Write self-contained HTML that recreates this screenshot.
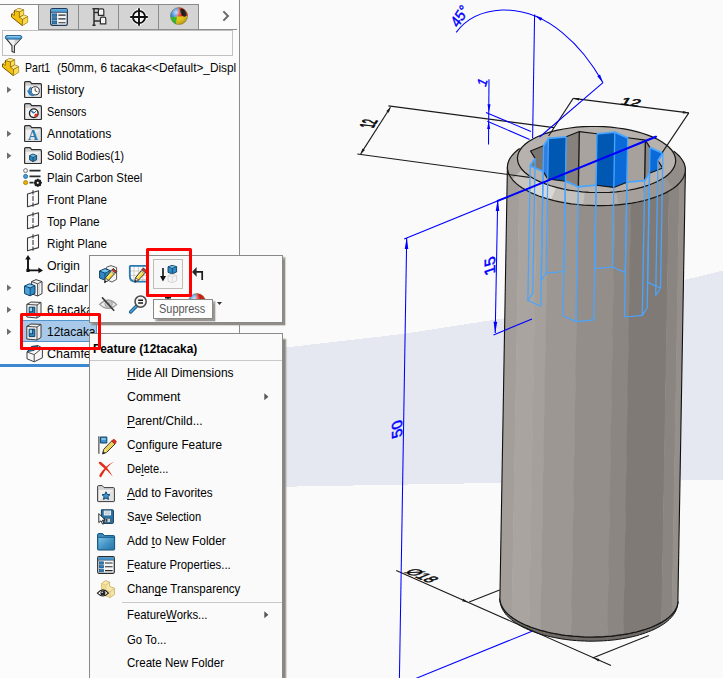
<!DOCTYPE html>
<html lang="en"><head><meta charset="utf-8"><title>SolidWorks - Suppress feature</title>
<style>
html,body{margin:0;padding:0}
body{width:723px;height:678px;position:relative;overflow:hidden;background:#fafafa;font-family:"Liberation Sans",sans-serif;font-size:12.5px;color:#0c0c0c}
.t{position:absolute;white-space:nowrap;transform-origin:0 50%;color:#050505}
.t u{text-decoration:underline;text-underline-offset:1.5px;text-decoration-thickness:1px}
.ic{position:absolute;overflow:visible}
.pbg{position:absolute;left:0;top:0;width:239px;height:678px;background:#fcfcfc}
.pline{position:absolute;left:239px;top:0;width:1px;height:678px;background:#8c8c8c}
.tabtop{position:absolute;left:0;top:4px;width:199px;height:1px;background:#8a8a8a}
.tab{position:absolute;top:4px;width:40px;height:26px;background:#d4d4d4;border:1px solid #8a8a8a;border-right:none;box-sizing:border-box}
.tab.act{background:#fcfcfc;border:none;border-top:1px solid #8a8a8a;height:26px}
.tabline{position:absolute;left:38px;top:29px;width:199px;height:1px;background:#8e8e8e}
.filter{position:absolute;left:2px;top:30px;width:231px;height:26px;border:1px solid #c0c0c0;box-sizing:border-box;background:#fbfbfb}
.sel{position:absolute;left:23px;top:320px;width:74px;height:22px;background:#a8c9e9;border:1px solid #4f95cc;border-left:none;box-sizing:border-box}
.rollbar{position:absolute;left:0;top:364px;width:90px;height:3px;background:#3c88d0}
.red{position:absolute;border:3px solid #fe0000;border-radius:1.5px;box-sizing:content-box}
.tb{position:absolute;left:89px;top:255px;width:194px;height:68px;background:#fafafa;border:1px solid #8b8985;box-sizing:border-box;box-shadow:2px 2px 1.5px 0.5px #8f8c88}
.tbbtn{position:absolute;left:153px;top:259px;width:30px;height:30px;background:#f7f7f7;border:1px solid #bfbcb8;box-sizing:border-box}
.tip{position:absolute;left:153px;top:299px;width:60px;height:20px;background:#fdfdfd;border:1px solid #8b8985;box-sizing:border-box;box-shadow:2px 2px 1.5px 0.5px #9a9793}
.menu{position:absolute;left:89px;top:333px;width:194px;height:360px;background:#fafafa;border:1px solid #8b8985;box-sizing:border-box;box-shadow:3px 6px 1.5px -0.2px #8a8783}
.msep{position:absolute;right:0;height:1px;background:#c9c9c9}
.tabend{position:absolute;left:198px;top:4px;width:1px;height:26px;background:#8a8a8a}

</style></head>
<body>
<svg id="scene" width="723" height="678" viewBox="0 0 723 678" style="position:absolute;left:0;top:0">
<rect x="0" y="0" width="723" height="678" fill="#fafafa"/>
<polygon points="240.0,353.0 287.0,347.3 404.0,333.8 440.0,328.2 503.0,318.5 600.0,299.6 684.0,280.1 723.0,270.5 723.0,480.0 684.0,480.0 503.0,482.8 287.0,486.7 240.0,487.5" fill="#e6e8f1" shape-rendering="crispEdges"/>
<rect x="240" y="486" width="483" height="192" fill="#f9f9f9" opacity="0"/>
<polygon points="499.9,598.3 500.0,599.9 500.2,601.5 500.6,603.1 501.2,604.7 501.9,606.3 502.8,607.9 503.8,609.5 505.1,611.1 506.4,612.6 508.0,614.1 509.7,615.6 511.5,617.0 513.5,618.5 515.6,619.8 517.9,621.2 520.3,622.5 522.9,623.8 525.5,625.0 528.3,626.1 531.2,627.3 534.2,628.3 537.3,629.3 540.5,630.3 543.9,631.2 547.2,632.0 550.7,632.8 554.3,633.5 557.9,634.2 561.5,634.8 565.3,635.3 569.0,635.7 572.8,636.1 576.7,636.4 580.5,636.7 584.4,636.9 588.3,637.0 592.1,637.0 596.0,636.9 599.9,636.8 603.7,636.7 607.5,636.4 611.3,636.1 615.1,635.7 618.7,635.2 622.4,634.7 625.9,634.1 629.4,633.5 632.9,632.7 636.2,632.0 639.4,631.1 642.6,630.2 645.6,629.3 648.6,628.2 651.4,627.2 654.1,626.0 656.7,624.9 659.1,623.6 661.4,622.4 663.6,621.1 665.7,619.7 667.6,618.3 669.3,616.9 670.9,615.4 672.3,614.0 673.6,612.4 674.7,610.9 675.7,609.3 676.4,607.8 677.1,606.2 677.5,604.6 677.8,603.0 677.9,601.3 677.9,601.3 677.8,603.6 677.5,605.5 677.1,607.4 676.4,609.2 675.7,611.0 674.7,612.8 673.6,614.5 672.3,616.2 670.9,617.8 669.3,619.4 667.6,621.0 665.7,622.5 663.6,624.0 661.4,625.4 659.1,626.8 656.7,628.1 654.1,629.4 651.4,630.6 648.6,631.7 645.6,632.8 642.6,633.9 639.4,634.8 636.2,635.8 632.9,636.6 629.4,637.4 625.9,638.1 622.4,638.7 618.7,639.3 615.1,639.8 611.3,640.2 607.5,640.5 603.7,640.8 599.9,641.0 596.0,641.1 592.1,641.2 588.3,641.2 584.4,641.0 580.5,640.9 576.7,640.6 572.8,640.3 569.0,639.9 565.3,639.4 561.5,638.9 557.9,638.2 554.3,637.5 550.7,636.8 547.2,636.0 543.9,635.1 540.5,634.1 537.3,633.1 534.2,632.0 531.2,630.8 528.3,629.6 525.5,628.4 522.9,627.1 520.3,625.7 517.9,624.3 515.6,622.9 513.5,621.4 511.5,619.8 509.7,618.2 508.0,616.6 506.4,615.0 505.1,613.3 503.8,611.5 502.8,609.8 501.9,608.0 501.2,606.2 500.6,604.4 500.2,602.5 500.0,600.5 499.9,598.3" fill="#6f6a66" stroke="#111" stroke-width="1" stroke-linejoin="round"/>
<clipPath id="bodyclip"><polygon points="507.4,166.9 499.9,598.3 500.0,599.9 500.2,601.5 500.6,603.1 501.2,604.7 501.9,606.3 502.8,607.9 503.8,609.5 505.1,611.1 506.4,612.6 508.0,614.1 509.7,615.6 511.5,617.0 513.5,618.5 515.6,619.8 517.9,621.2 520.3,622.5 522.9,623.8 525.5,625.0 528.3,626.1 531.2,627.3 534.2,628.3 537.3,629.3 540.5,630.3 543.9,631.2 547.2,632.0 550.7,632.8 554.3,633.5 557.9,634.2 561.5,634.8 565.3,635.3 569.0,635.7 572.8,636.1 576.7,636.4 580.5,636.7 584.4,636.9 588.3,637.0 592.1,637.0 596.0,636.9 599.9,636.8 603.7,636.7 607.5,636.4 611.3,636.1 615.1,635.7 618.7,635.2 622.4,634.7 625.9,634.1 629.4,633.5 632.9,632.7 636.2,632.0 639.4,631.1 642.6,630.2 645.6,629.3 648.6,628.2 651.4,627.2 654.1,626.0 656.7,624.9 659.1,623.6 661.4,622.4 663.6,621.1 665.7,619.7 667.6,618.3 669.3,616.9 670.9,615.4 672.3,614.0 673.6,612.4 674.7,610.9 675.7,609.3 676.4,607.8 677.1,606.2 677.5,604.6 677.8,603.0 677.9,601.3 685.4,170.0 685.4,170.0 685.3,168.4 685.1,166.8 684.7,165.2 684.2,163.6 683.4,162.0 682.5,160.4 681.5,158.8 680.2,157.2 678.9,155.7 677.3,154.2 675.6,152.7 673.8,151.2 671.8,149.8 669.7,148.4 667.4,147.1 665.0,145.8 662.4,144.5 659.8,143.3 657.0,142.1 654.1,141.0 651.1,139.9 648.0,138.9 644.8,138.0 641.5,137.1 638.1,136.2 634.6,135.5 631.0,134.7 627.4,134.1 623.8,133.5 620.1,133.0 616.3,132.5 612.5,132.2 608.6,131.8 604.8,131.6 600.9,131.4 597.0,131.3 593.2,131.3 589.3,131.3 585.4,131.4 581.6,131.6 577.8,131.9 574.0,132.2 570.2,132.6 566.6,133.0 562.9,133.6 559.4,134.2 555.9,134.8 552.5,135.5 549.1,136.3 545.9,137.2 542.7,138.1 539.7,139.0 536.7,140.0 533.9,141.1 531.2,142.2 528.6,143.4 526.2,144.6 523.9,145.9 521.7,147.2 519.6,148.6 517.8,150.0 516.0,151.4 514.4,152.8 513.0,154.3 511.7,155.8 510.6,157.4 509.6,158.9 508.9,160.5 508.2,162.1 507.8,163.7 507.5,165.3 507.4,166.9" /></clipPath>
<g clip-path="url(#bodyclip)"><polygon points="504.5,104.0 521.0,104.3 511.3,661.4 494.9,661.1" fill="#a39e99"/><polygon points="520.5,104.2 538.6,104.6 528.9,661.7 510.8,661.4" fill="#a9a49f"/><polygon points="538.1,104.6 550.0,104.8 540.3,661.9 528.4,661.7" fill="#a5a09b"/><polygon points="549.5,104.8 580.7,105.3 571.0,662.4 539.8,661.9" fill="#9c9792"/><polygon points="580.2,105.3 617.0,105.9 607.3,663.0 570.5,662.4" fill="#938e89"/><polygon points="616.5,105.9 633.0,106.2 623.3,663.3 606.8,663.0" fill="#8b8681"/><polygon points="632.5,106.2 670.7,106.9 661.0,664.0 622.8,663.3" fill="#7f7a75"/><polygon points="670.2,106.8 681.0,107.0 671.3,664.1 660.5,664.0" fill="#8a8580"/><polygon points="680.5,107.0 690.0,107.2 680.3,664.3 670.8,664.1" fill="#948f8a"/></g>
<line x1="507.4" y1="166.9" x2="499.9" y2="598.3" stroke="#101010" stroke-width="1.1"/>
<line x1="685.4" y1="170.0" x2="677.9" y2="601.3" stroke="#101010" stroke-width="1.1"/>
<polyline points="499.9,598.3 500.0,599.9 500.2,601.5 500.6,603.1 501.2,604.7 501.9,606.3 502.8,607.9 503.8,609.5 505.1,611.1 506.4,612.6 508.0,614.1 509.7,615.6 511.5,617.0 513.5,618.5 515.6,619.8 517.9,621.2 520.3,622.5 522.9,623.8 525.5,625.0 528.3,626.1 531.2,627.3 534.2,628.3 537.3,629.3 540.5,630.3 543.9,631.2 547.2,632.0 550.7,632.8 554.3,633.5 557.9,634.2 561.5,634.8 565.3,635.3 569.0,635.7 572.8,636.1 576.7,636.4 580.5,636.7 584.4,636.9 588.3,637.0 592.1,637.0 596.0,636.9 599.9,636.8 603.7,636.7 607.5,636.4 611.3,636.1 615.1,635.7 618.7,635.2 622.4,634.7 625.9,634.1 629.4,633.5 632.9,632.7 636.2,632.0 639.4,631.1 642.6,630.2 645.6,629.3 648.6,628.2 651.4,627.2 654.1,626.0 656.7,624.9 659.1,623.6 661.4,622.4 663.6,621.1 665.7,619.7 667.6,618.3 669.3,616.9 670.9,615.4 672.3,614.0 673.6,612.4 674.7,610.9 675.7,609.3 676.4,607.8 677.1,606.2 677.5,604.6 677.8,603.0 677.9,601.3" fill="none" stroke="#151515" stroke-width="1.2"/>
<polygon points="685.4,170.0 685.1,166.8 684.2,163.6 682.5,160.4 680.2,157.2 677.3,154.2 673.8,151.2 669.7,148.4 665.0,145.8 659.8,143.3 654.1,141.0 648.0,138.9 641.5,137.1 634.6,135.5 627.4,134.1 620.1,133.0 612.5,132.2 604.8,131.6 597.0,131.3 589.3,131.3 581.6,131.6 574.0,132.2 566.6,133.0 559.4,134.2 552.5,135.5 545.9,137.2 539.7,139.0 533.9,141.1 528.6,143.4 523.9,145.9 519.6,148.6 516.0,151.4 513.0,154.3 510.6,157.4 508.9,160.5 507.8,163.7 507.4,166.9 507.7,170.2 508.6,173.4 510.3,176.6 512.5,179.7 515.5,182.8 519.0,185.7 523.1,188.5 527.8,191.2 533.0,193.7 538.7,196.0 544.8,198.0 551.3,199.9 558.2,201.5 565.3,202.9 572.7,204.0 580.3,204.8 588.0,205.4 595.7,205.6 603.5,205.6 611.2,205.3 618.8,204.8 626.2,203.9 633.4,202.8 640.3,201.4 646.9,199.8 653.1,197.9 658.9,195.9 664.2,193.6 668.9,191.1 673.1,188.4 676.8,185.6 679.8,182.6 682.2,179.6 683.9,176.5 685.0,173.3 685.4,170.0" fill="#b5b0ab"/>
<polygon points="519.6,148.6 516.9,150.7 514.4,152.8 512.3,155.1 510.6,157.4 509.2,159.7 508.2,162.1 507.6,164.5 507.4,166.9 517.4,158.1 517.6,156.0 518.2,153.8 519.1,151.7 520.3,149.6 521.8,147.6 523.7,145.6 525.9,143.7 528.3,141.8" fill="#a9a49f" stroke="#a9a49f" stroke-width="0.4"/>
<polygon points="507.4,166.9 507.5,168.6 507.7,170.2 508.1,171.8 508.6,173.4 509.4,175.0 510.3,176.6 511.3,178.2 512.5,179.7 522.0,169.5 520.9,168.1 520.0,166.7 519.2,165.3 518.5,163.9 518.0,162.5 517.7,161.0 517.5,159.6 517.4,158.1" fill="#aaa5a0" stroke="#aaa5a0" stroke-width="0.4"/>
<polygon points="512.5,179.7 514.1,181.4 515.8,183.1 517.7,184.7 519.8,186.3 522.0,187.8 524.5,189.3 527.1,190.8 529.8,192.2 537.4,180.6 534.9,179.3 532.6,178.0 530.5,176.7 528.4,175.3 526.6,173.9 524.9,172.5 523.4,171.0 522.0,169.5" fill="#c9c6c2" stroke="#c9c6c2" stroke-width="0.4"/>
<polygon points="529.8,192.2 532.2,193.3 534.7,194.4 537.2,195.4 539.9,196.4 542.6,197.3 545.5,198.2 548.4,199.1 551.3,199.9 556.5,187.4 553.9,186.7 551.3,185.9 548.8,185.1 546.3,184.3 544.0,183.4 541.7,182.5 539.5,181.6 537.4,180.6" fill="#dad8d5" stroke="#dad8d5" stroke-width="0.4"/>
<polygon points="551.3,199.9 555.1,200.8 558.9,201.7 562.8,202.4 566.8,203.1 570.9,203.7 575.0,204.3 579.2,204.7 583.4,205.1 585.0,192.0 581.2,191.7 577.5,191.3 573.9,190.8 570.3,190.3 566.7,189.7 563.2,189.0 559.8,188.2 556.5,187.4" fill="#c4c0bb" stroke="#c4c0bb" stroke-width="0.4"/>
<polygon points="583.4,205.1 587.8,205.4 592.3,205.6 596.7,205.7 601.2,205.7 605.6,205.6 610.1,205.4 614.5,205.1 618.8,204.8 616.5,191.8 612.6,192.1 608.7,192.3 604.8,192.5 600.8,192.5 596.8,192.5 592.9,192.4 588.9,192.3 585.0,192.0" fill="#b3aea9" stroke="#b3aea9" stroke-width="0.4"/>
<polygon points="618.8,204.8 622.5,204.4 626.2,203.9 629.9,203.4 633.4,202.8 636.9,202.2 640.3,201.4 643.7,200.7 646.9,199.8 641.5,187.3 638.6,188.1 635.6,188.8 632.6,189.4 629.5,190.0 626.3,190.5 623.1,191.0 619.8,191.4 616.5,191.8" fill="#a5a09b" stroke="#a5a09b" stroke-width="0.4"/>
<polygon points="646.9,199.8 650.8,198.7 654.6,197.4 658.2,196.1 661.6,194.7 664.8,193.3 667.8,191.7 670.6,190.1 673.1,188.4 664.8,177.2 662.5,178.7 660.0,180.1 657.3,181.5 654.5,182.8 651.5,184.1 648.3,185.2 644.9,186.3 641.5,187.3" fill="#9b9691" stroke="#9b9691" stroke-width="0.4"/>
<polygon points="673.1,188.4 675.9,186.3 678.4,184.1 680.5,181.9 682.2,179.6 683.6,177.2 684.5,174.9 685.2,172.5 685.4,170.0 675.7,160.9 675.5,163.0 674.9,165.2 674.0,167.3 672.8,169.4 671.3,171.4 669.4,173.4 667.2,175.3 664.8,177.2" fill="#928d88" stroke="#928d88" stroke-width="0.4"/>
<polygon points="685.4,170.0 685.2,167.6 684.7,165.2 683.8,162.8 682.5,160.4 680.9,158.0 678.9,155.7 676.5,153.4 673.8,151.2 665.3,144.2 667.8,146.1 669.9,148.1 671.6,150.2 673.1,152.3 674.2,154.4 675.1,156.5 675.5,158.7 675.7,160.9" fill="#948f8a" stroke="#948f8a" stroke-width="0.4"/>
<polyline points="519.6,148.6 516.7,150.8 514.1,153.1 512.0,155.5 510.2,158.0 508.9,160.5 508.0,163.1 507.5,165.6 507.4,168.2 507.8,170.8 508.6,173.4 509.9,176.0 511.6,178.5 513.6,181.0 516.1,183.4 519.0,185.7 522.3,188.0 525.9,190.1 529.8,192.2 534.1,194.1 538.7,196.0 543.6,197.6 548.7,199.2 554.0,200.6 559.6,201.8 565.3,202.9 571.2,203.8 577.3,204.5 583.4,205.1 589.5,205.4 595.7,205.6 602.0,205.7 608.1,205.5 614.3,205.2 620.3,204.6 626.2,203.9 632.0,203.1 637.6,202.0 643.0,200.8 648.2,199.5 653.1,197.9 657.8,196.3 662.1,194.5 666.1,192.6 669.8,190.5 673.1,188.4 676.1,186.2 678.7,183.8 680.8,181.4 682.6,179.0 683.9,176.5 684.8,173.9 685.3,171.3 685.4,168.7 685.0,166.1 684.2,163.6 682.9,161.0 681.2,158.5 679.2,156.0 676.7,153.6 673.8,151.2" fill="none" stroke="#151515" stroke-width="1.2"/>
<polygon points="675.7,160.9 675.4,158.0 674.6,155.1 673.1,152.3 671.1,149.5 668.5,146.8 665.3,144.2 661.7,141.7 657.5,139.3 652.9,137.1 647.8,135.1 642.4,133.2 636.6,131.6 630.5,130.1 624.1,128.9 617.6,128.0 610.9,127.2 604.0,126.7 597.1,126.5 590.2,126.5 583.4,126.7 576.6,127.2 570.0,128.0 563.6,129.0 557.5,130.2 551.6,131.7 546.1,133.3 541.0,135.2 536.3,137.2 532.1,139.4 528.3,141.8 525.1,144.3 522.4,146.9 520.3,149.6 518.7,152.4 517.8,155.3 517.4,158.1 517.7,161.0 518.5,163.9 520.0,166.7 522.0,169.5 524.6,172.2 527.8,174.8 531.4,177.3 535.6,179.7 540.2,181.9 545.3,183.9 550.7,185.8 556.5,187.4 562.6,188.9 569.0,190.1 575.5,191.0 582.2,191.8 589.1,192.3 596.0,192.5 602.9,192.5 609.7,192.3 616.5,191.8 623.1,191.0 629.5,190.0 635.6,188.8 641.5,187.3 647.0,185.7 652.1,183.8 656.8,181.8 661.0,179.6 664.8,177.2 668.0,174.7 670.7,172.1 672.8,169.4 674.4,166.6 675.3,163.7 675.7,160.9" fill="#b7b2ad"/>
<clipPath id="holeclip"><polygon points="662.9,153.2 650.0,147.6 645.4,140.1 627.7,137.8 614.8,132.2 597.0,133.8 579.3,131.6 566.2,136.8 548.4,138.4 543.6,145.8 530.5,150.9 535.1,158.4 530.2,165.8 543.1,171.4 547.7,178.9 565.4,181.2 578.3,186.8 596.1,185.2 613.8,187.4 626.9,182.2 644.7,180.6 649.5,173.2 662.6,168.1 658.0,160.6" /></clipPath>
<g clip-path="url(#holeclip)"><polygon points="662.9,153.2 650.0,147.6 645.4,140.1 627.7,137.8 614.8,132.2 597.0,133.8 579.3,131.6 566.2,136.8 548.4,138.4 543.6,145.8 530.5,150.9 535.1,158.4 530.2,165.8 543.1,171.4 547.7,178.9 565.4,181.2 578.3,186.8 596.1,185.2 613.8,187.4 626.9,182.2 644.7,180.6 649.5,173.2 662.6,168.1 658.0,160.6" fill="#8a8580"/><polygon points="535.1,158.4 530.5,150.9 528.1,285.7 532.8,293.2" fill="#8f8a85" stroke="#8f8a85" stroke-width="0.5"/><polygon points="530.5,150.9 543.6,145.8 541.2,280.5 528.1,285.7" fill="#7b7671" stroke="#7b7671" stroke-width="0.5"/><polygon points="543.6,145.8 548.4,138.4 546.1,273.2 541.2,280.5" fill="#2f7fe0" stroke="#2f7fe0" stroke-width="0.5"/><polygon points="548.4,138.4 566.2,136.8 563.9,271.5 546.1,273.2" fill="#0058b3" stroke="#0058b3" stroke-width="0.5"/><polygon points="566.2,136.8 579.3,131.6 577.0,266.3 563.9,271.5" fill="#86817c" stroke="#86817c" stroke-width="0.5"/><polygon points="579.3,131.6 597.0,133.8 594.7,268.6 577.0,266.3" fill="#a8a39e" stroke="#a8a39e" stroke-width="0.5"/><polygon points="597.0,133.8 614.8,132.2 612.4,267.0 594.7,268.6" fill="#0058b3" stroke="#0058b3" stroke-width="0.5"/><polygon points="614.8,132.2 627.7,137.8 625.3,272.6 612.4,267.0" fill="#0a6bd8" stroke="#0a6bd8" stroke-width="0.5"/><polygon points="627.7,137.8 645.4,140.1 643.0,274.9 625.3,272.6" fill="#a6a19c" stroke="#a6a19c" stroke-width="0.5"/><polygon points="645.4,140.1 650.0,147.6 647.6,282.4 643.0,274.9" fill="#8c8782" stroke="#8c8782" stroke-width="0.5"/><polygon points="650.0,147.6 662.9,153.2 660.5,288.0 647.6,282.4" fill="#0a6bd8" stroke="#0a6bd8" stroke-width="0.5"/><polygon points="662.9,153.2 658.0,160.6 655.7,295.4 660.5,288.0" fill="#2f7fe0" stroke="#2f7fe0" stroke-width="0.5"/><polygon points="658.0,160.6 662.6,168.1 660.3,302.8 655.7,295.4" fill="#9a9590" stroke="#9a9590" stroke-width="0.5"/><line x1="579.3" y1="131.6" x2="577.0" y2="266.3" stroke="#1a1a1a" stroke-width="1.4"/><line x1="645.4" y1="140.1" x2="643.0" y2="274.9" stroke="#1a1a1a" stroke-width="1.4"/></g>
<polygon points="675.7,160.9 675.4,158.0 674.6,155.1 673.1,152.3 671.1,149.5 668.5,146.8 665.3,144.2 661.7,141.7 657.5,139.3 652.9,137.1 647.8,135.1 642.4,133.2 636.6,131.6 630.5,130.1 624.1,128.9 617.6,128.0 610.9,127.2 604.0,126.7 597.1,126.5 590.2,126.5 583.4,126.7 576.6,127.2 570.0,128.0 563.6,129.0 557.5,130.2 551.6,131.7 546.1,133.3 541.0,135.2 536.3,137.2 532.1,139.4 528.3,141.8 525.1,144.3 522.4,146.9 520.3,149.6 518.7,152.4 517.8,155.3 517.4,158.1 517.7,161.0 518.5,163.9 520.0,166.7 522.0,169.5 524.6,172.2 527.8,174.8 531.4,177.3 535.6,179.7 540.2,181.9 545.3,183.9 550.7,185.8 556.5,187.4 562.6,188.9 569.0,190.1 575.5,191.0 582.2,191.8 589.1,192.3 596.0,192.5 602.9,192.5 609.7,192.3 616.5,191.8 623.1,191.0 629.5,190.0 635.6,188.8 641.5,187.3 647.0,185.7 652.1,183.8 656.8,181.8 661.0,179.6 664.8,177.2 668.0,174.7 670.7,172.1 672.8,169.4 674.4,166.6 675.3,163.7 675.7,160.9" fill="none" stroke="#151515" stroke-width="1.2"/>
<polyline points="649.5,173.2 662.6,168.1 658.0,160.6" fill="none" stroke="#151515" stroke-width="1.1" stroke-linejoin="round"/>
<polyline points="650.0,147.6 645.4,140.1 627.7,137.8" fill="none" stroke="#151515" stroke-width="1.1" stroke-linejoin="round"/>
<polyline points="597.0,133.8 579.3,131.6 566.2,136.8" fill="none" stroke="#151515" stroke-width="1.1" stroke-linejoin="round"/>
<polyline points="543.6,145.8 530.5,150.9 535.1,158.4" fill="none" stroke="#151515" stroke-width="1.1" stroke-linejoin="round"/>
<polyline points="543.1,171.4 547.7,178.9 565.4,181.2" fill="none" stroke="#151515" stroke-width="1.1" stroke-linejoin="round"/>
<polyline points="596.1,185.2 613.8,187.4 626.9,182.2" fill="none" stroke="#151515" stroke-width="1.1" stroke-linejoin="round"/>
<polyline points="658.0,160.6 662.9,153.2 650.0,147.6" fill="none" stroke="#4aa5ff" stroke-width="1.8" stroke-linejoin="round"/><polyline points="655.7,295.4 660.5,288.0 647.6,282.4" fill="none" stroke="#4aa5ff" stroke-width="1.2" stroke-linejoin="round"/><line x1="658.0" y1="160.6" x2="655.7" y2="295.4" stroke="#4aa5ff" stroke-width="1.3"/><line x1="662.9" y1="153.2" x2="660.5" y2="288.0" stroke="#4aa5ff" stroke-width="1.3"/><line x1="650.0" y1="147.6" x2="647.6" y2="282.4" stroke="#4aa5ff" stroke-width="1.3"/><polyline points="627.7,137.8 614.8,132.2 597.0,133.8" fill="none" stroke="#4aa5ff" stroke-width="1.8" stroke-linejoin="round"/><polyline points="625.3,272.6 612.4,267.0 594.7,268.6" fill="none" stroke="#4aa5ff" stroke-width="1.2" stroke-linejoin="round"/><line x1="627.7" y1="137.8" x2="625.3" y2="272.6" stroke="#4aa5ff" stroke-width="1.3"/><line x1="614.8" y1="132.2" x2="612.4" y2="267.0" stroke="#4aa5ff" stroke-width="1.3"/><line x1="597.0" y1="133.8" x2="594.7" y2="268.6" stroke="#4aa5ff" stroke-width="1.3"/><polyline points="566.2,136.8 548.4,138.4 543.6,145.8" fill="none" stroke="#4aa5ff" stroke-width="1.8" stroke-linejoin="round"/><polyline points="563.9,271.5 546.1,273.2 541.2,280.5" fill="none" stroke="#4aa5ff" stroke-width="1.2" stroke-linejoin="round"/><line x1="566.2" y1="136.8" x2="563.9" y2="271.5" stroke="#4aa5ff" stroke-width="1.3"/><line x1="548.4" y1="138.4" x2="546.1" y2="273.2" stroke="#4aa5ff" stroke-width="1.3"/><line x1="543.6" y1="145.8" x2="541.2" y2="280.5" stroke="#4aa5ff" stroke-width="1.3"/><polyline points="535.1,158.4 530.2,165.8 543.1,171.4" fill="none" stroke="#4aa5ff" stroke-width="1.8" stroke-linejoin="round"/><polyline points="532.8,293.2 527.9,300.5 540.8,306.2" fill="none" stroke="#4aa5ff" stroke-width="1.2" stroke-linejoin="round"/><line x1="535.1" y1="158.4" x2="532.8" y2="293.2" stroke="#4aa5ff" stroke-width="1.3"/><line x1="530.2" y1="165.8" x2="527.9" y2="300.5" stroke="#4aa5ff" stroke-width="1.3"/><line x1="543.1" y1="171.4" x2="540.8" y2="306.2" stroke="#4aa5ff" stroke-width="1.3"/><polyline points="565.4,181.2 578.3,186.8 596.1,185.2" fill="none" stroke="#4aa5ff" stroke-width="1.8" stroke-linejoin="round"/><polyline points="563.1,316.0 576.0,321.6 593.8,319.9" fill="none" stroke="#4aa5ff" stroke-width="1.2" stroke-linejoin="round"/><line x1="565.4" y1="181.2" x2="563.1" y2="316.0" stroke="#4aa5ff" stroke-width="1.3"/><line x1="578.3" y1="186.8" x2="576.0" y2="321.6" stroke="#4aa5ff" stroke-width="1.3"/><line x1="596.1" y1="185.2" x2="593.8" y2="319.9" stroke="#4aa5ff" stroke-width="1.3"/><polyline points="626.9,182.2 644.7,180.6 649.5,173.2" fill="none" stroke="#4aa5ff" stroke-width="1.8" stroke-linejoin="round"/><polyline points="624.5,317.0 642.3,315.4 647.2,308.0" fill="none" stroke="#4aa5ff" stroke-width="1.2" stroke-linejoin="round"/><line x1="626.9" y1="182.2" x2="624.5" y2="317.0" stroke="#4aa5ff" stroke-width="1.3"/><line x1="644.7" y1="180.6" x2="642.3" y2="315.4" stroke="#4aa5ff" stroke-width="1.3"/><line x1="649.5" y1="173.2" x2="647.2" y2="308.0" stroke="#4aa5ff" stroke-width="1.3"/>
<line x1="388.4" y1="105.9" x2="554.0" y2="127.6" stroke="#1a1a1a" stroke-width="1.1"/>
<line x1="357.3" y1="154.0" x2="529.5" y2="177.4" stroke="#1a1a1a" stroke-width="1.1"/>
<line x1="390.5" y1="107.3" x2="360.7" y2="153.9" stroke="#1a1a1a" stroke-width="1.1"/>
<polygon points="390.5,107.3 386.3,111.1 388.8,112.7" fill="#1a1a1a"/>
<polygon points="360.7,153.9 364.9,150.1 362.4,148.5" fill="#1a1a1a"/>
<text transform="translate(375.4,124.3) scale(1,0.4175) rotate(-75.0) skewX(0.0) scale(0.820,1)" font-family="Liberation Sans, sans-serif" font-size="21" text-anchor="middle" fill="#080808" stroke="#080808" stroke-width="1.0">12</text>
<line x1="573.2" y1="98.4" x2="688.8" y2="112.9" stroke="#1a1a1a" stroke-width="1.1"/>
<line x1="573.2" y1="98.4" x2="548.6" y2="136.0" stroke="#1a1a1a" stroke-width="1.1"/>
<line x1="688.8" y1="112.9" x2="662.2" y2="152.6" stroke="#1a1a1a" stroke-width="1.1"/>
<polygon points="573.2,98.4 579.0,100.4 579.3,97.9" fill="#1a1a1a"/>
<polygon points="688.8,112.9 683.0,110.9 682.7,113.4" fill="#1a1a1a"/>
<text transform="translate(629.0,105.4) scale(1,0.4676) rotate(15.3) skewX(0.0) scale(0.800,1)" font-family="Liberation Sans, sans-serif" font-size="22" text-anchor="middle" fill="#080808" stroke="#080808" stroke-width="1.0">12</text>
<line x1="396.2" y1="570.5" x2="611.0" y2="665.6" stroke="#1a1a1a" stroke-width="1.1"/>
<line x1="469.2" y1="601.9" x2="499.6" y2="590.1" stroke="#1a1a1a" stroke-width="1.1"/>
<line x1="592.6" y1="658.1" x2="648.8" y2="635.4" stroke="#1a1a1a" stroke-width="1.1"/>
<polygon points="468.2,602.4 463.2,598.8 462.2,601.2" fill="#1a1a1a"/>
<polygon points="593.4,657.8 598.4,661.4 599.4,659.0" fill="#1a1a1a"/>
<text transform="translate(416.6,577.8) scale(1,0.4175) rotate(45.9) skewX(0.0) scale(0.880,1)" font-family="Liberation Sans, sans-serif" font-size="22" text-anchor="middle" fill="#080808" stroke="#080808" stroke-width="0.9">&#216;18</text>
<line x1="406.7" y1="238.1" x2="399.3" y2="685.0" stroke="#0000ff" stroke-width="1.05"/>
<polygon points="406.7,237.6 404.7,249.1 408.3,249.1" fill="#0000ff"/>
<line x1="404.2" y1="238.9" x2="657.0" y2="136.2" stroke="#0000ff" stroke-width="1.1"/>
<line x1="497.0" y1="201.2" x2="656.4" y2="136.5" stroke="#0000ff" stroke-width="1.9"/>
<line x1="399.3" y1="685.2" x2="532.0" y2="631.2" stroke="#0000ff" stroke-width="1.05"/>
<text transform="translate(401.6,427.6) scale(1,1.0000) rotate(-90.0) skewX(19.0) scale(1.080,1)" font-family="Liberation Sans, sans-serif" font-size="14.5" text-anchor="middle" fill="#0000ff" stroke="#0000ff" stroke-width="0.5">50</text>
<line x1="497.7" y1="199.9" x2="495.2" y2="333.0" stroke="#0000ff" stroke-width="1.05"/>
<polygon points="497.7,199.6 495.7,211.1 499.3,211.1" fill="#0000ff"/>
<polygon points="495.2,333.2 497.2,321.7 493.6,321.7" fill="#0000ff"/>
<line x1="493.5" y1="334.9" x2="532.0" y2="319.0" stroke="#0000ff" stroke-width="1.05"/>
<text transform="translate(495.4,264.2) scale(1,1.0000) rotate(-90.0) skewX(19.0) scale(1.080,1)" font-family="Liberation Sans, sans-serif" font-size="15" text-anchor="middle" fill="#0000ff" stroke="#0000ff" stroke-width="0.5">15</text>
<path d="M456.2,32.4 C466,19 482,11 502,10 C548,9 583,47 603,82.7" fill="none" stroke="#0000ff" stroke-width="1.05"/>
<line x1="534.6" y1="14.4" x2="532.6" y2="138.2" stroke="#0000ff" stroke-width="1.05"/>
<line x1="603.0" y1="82.7" x2="539.6" y2="137.0" stroke="#0000ff" stroke-width="1.05"/>
<polygon points="534.8,15.2 540.7,20.8 542.4,18.1" fill="#0000ff"/>
<polygon points="603.0,82.7 600.0,74.6 597.3,76.2" fill="#0000ff"/>
<text transform="translate(463.5,19.5) scale(1,1.0000) rotate(-57.0) skewX(-8.0) scale(0.950,1)" font-family="Liberation Sans, sans-serif" font-size="15" text-anchor="middle" fill="#0000ff" stroke="#0000ff" stroke-width="0.4">45&#176;</text>
<line x1="489.0" y1="79.2" x2="488.5" y2="144.4" stroke="#0000ff" stroke-width="1.05"/>
<polygon points="489.0,112.2 490.5,104.2 487.5,104.2" fill="#0000ff"/>
<polygon points="488.6,121.0 487.1,129.0 490.1,129.0" fill="#0000ff"/>
<line x1="486.0" y1="112.5" x2="530.9" y2="131.4" stroke="#0000ff" stroke-width="1.05"/>
<line x1="487.3" y1="121.2" x2="529.6" y2="139.4" stroke="#0000ff" stroke-width="1.05"/>
<text transform="translate(486.6,84.2) scale(1,1.0000) rotate(-74.0) skewX(-10.0) scale(1.000,1)" font-family="Liberation Sans, sans-serif" font-size="13.5" text-anchor="middle" fill="#0000ff" stroke="#0000ff" stroke-width="0.45">1</text>
</svg>
<div class="pbg"></div><div class="pline"></div>
<div class="tabtop"></div>
<div class="tab act" style="left:0;width:38px"></div>
<div class="tab" style="left:38px"></div>
<div class="tab" style="left:78px"></div>
<div class="tab" style="left:118px"></div>
<div class="tab" style="left:158px"></div>
<div class="tabline"></div><div class="tabend"></div>
<svg class="ic" style="left:11px;top:8px;" width="18" height="18" viewBox="0 0 18 18"><path d="M0.5,6 L3.4,4.5 V2.6 L7.7,0.5 L12.6,1.8 V7 L16.6,8.6 V14.2 L11.2,17.5 L0.5,9 Z" fill="#f2c10e" stroke="#7a5200" stroke-width="1" stroke-linejoin="round"/><path d="M3.4,2.6 L7.7,0.5 L12.6,1.8 L8.4,3.9 Z" fill="#fdea86"/><path d="M8.4,3.9 L12.6,1.8 V7 L8.4,9.2 Z" fill="#f9dc55"/><path d="M0.5,6 L3.4,4.5 L3.4,7.4 Z" fill="#fdea86"/><path d="M8.4,9.2 L12.6,7 L16.6,8.6 L11.6,11.4 Z" fill="#fdea86"/><path d="M11.6,11.4 L16.6,8.6 V14.2 L11.2,17.5 Z" fill="#f9dc55"/><path d="M3.4,2.6 L8.4,3.9 V9.2 L11.6,11.4 L11.2,17.5 M8.4,3.9 L12.6,1.8 M8.4,9.2 L12.6,7 M11.6,11.4 L16.6,8.6 M0.5,6 L3.4,7.4 V2.6" fill="none" stroke="#7a5200" stroke-width="0.7" stroke-linejoin="round"/></svg>
<svg class="ic" style="left:50px;top:8px;" width="18" height="18" viewBox="0 0 18 18"><rect x="0.7" y="0.7" width="16.6" height="16.6" rx="1.6" fill="#f2f4f6" stroke="#1f3a56" stroke-width="1.3"/><path d="M1.2,1.2 H16.8 V4 H1.2 Z" fill="#4ea2dc"/><path d="M0.7,4.3 H17.3" stroke="#1f3a56" stroke-width="0.9"/><rect x="2.5" y="5.9" width="4.2" height="2.4" fill="#2a7fc0" stroke="#114a78" stroke-width="0.7"/><rect x="2.5" y="9.7" width="4.2" height="2.4" fill="#2a7fc0" stroke="#114a78" stroke-width="0.7"/><rect x="2.5" y="13.5" width="4.2" height="2.4" fill="#2a7fc0" stroke="#114a78" stroke-width="0.7"/><path d="M8.4,7.1 H15.6 M8.4,10.9 H15.6 M8.4,14.7 H15.6" stroke="#2b2b2b" stroke-width="1.1"/></svg>
<svg class="ic" style="left:91.5px;top:8px;" width="15" height="18" viewBox="0 0 15 18"><path d="M2,0.8 V17.2 M0.4,0.8 H7 M0.4,17.2 H3.6 M2,4.6 H6.4 M2,13 H8.4" fill="none" stroke="#2e2e2e" stroke-width="1.5"/><path d="M6.4,2.6 Q6.4,0.8 8.2,0.8 H10.2 Q11.8,0.8 11.8,2.6 V7.4 H6.4 Z" fill="#f4f4f4" stroke="#2e2e2e" stroke-width="1.2"/><path d="M8.4,11 Q8.4,9.2 10.2,9.2 H12.2 Q13.8,9.2 13.8,11 V15.8 H8.4 Z" fill="#f4f4f4" stroke="#2e2e2e" stroke-width="1.2"/></svg>
<svg class="ic" style="left:130px;top:8px;" width="18" height="18" viewBox="0 0 18 18"><circle cx="9" cy="9" r="6.1" fill="#ececec" stroke="#fff" stroke-width="3.6"/><path d="M9,0 V18 M0,9 H18" stroke="#fff" stroke-width="3.4"/><circle cx="9" cy="9" r="6.1" fill="none" stroke="#111" stroke-width="1.9"/><path d="M9,0.2 V17.8 M0.2,9 H17.8" stroke="#111" stroke-width="1.9"/></svg>
<svg class="ic" style="left:170px;top:7px;" width="18" height="18" viewBox="0 0 18 18"><defs><clipPath id="ballc"><circle cx="9" cy="9" r="8.6"/></clipPath><radialGradient id="ballg" cx="0.35" cy="0.3" r="0.75"><stop offset="0" stop-color="#fff" stop-opacity="0.75"/><stop offset="0.45" stop-color="#fff" stop-opacity="0"/><stop offset="1" stop-color="#000" stop-opacity="0.3"/></radialGradient></defs><g clip-path="url(#ballc)"><rect width="18" height="18" fill="#e4c20c"/><path d="M0,0 H9 L7,9.5 L0,10.5 Z" fill="#2f7de0"/><path d="M0,10.5 L7,9.5 L5.6,18 H0 Z" fill="#2db52a"/><path d="M9,0 H18 V9 L7,9.5 Z" fill="#e0241c"/><ellipse cx="13.2" cy="5.6" rx="2.5" ry="4.3" transform="rotate(-28 13.2 5.6)" fill="#161616"/><rect width="18" height="18" fill="url(#ballg)"/></g><circle cx="9" cy="9" r="8.6" fill="none" stroke="#6b5a2a" stroke-width="0.6" opacity="0.6"/></svg>
<svg class="ic" style="left:222px;top:10px;" width="8" height="12" viewBox="0 0 8 12"><path d="M1.4,1.4 L6,6 L1.4,10.6" fill="none" stroke="#666" stroke-width="1.9"/></svg>
<div class="filter"></div>
<svg class="ic" style="left:5px;top:35px;" width="17.5" height="18.5" viewBox="0 0 17.5 18.5"><path d="M1,3.4 L7,10.6 V16.6 L9.4,17.6 V10.6 L16,3.4 Z" fill="#f4f4f4" stroke="#333" stroke-width="1.1" stroke-linejoin="round"/><path d="M9.2,10.4 L15,4 H10 Z" fill="#cfcfcf"/><rect x="0.4" y="0.5" width="16.4" height="3.6" rx="1.6" fill="#4d9fd6" stroke="#1c5e92" stroke-width="0.9"/><path d="M2.4,1.7 H14.8" stroke="#a8d4f0" stroke-width="0.9"/></svg>
<div class="tree">
<svg class="ic" style="left:2.2px;top:58px;" width="18" height="18" viewBox="0 0 18 18"><path d="M0.5,6 L3.4,4.5 V2.6 L7.7,0.5 L12.6,1.8 V7 L16.6,8.6 V14.2 L11.2,17.5 L0.5,9 Z" fill="#f2c10e" stroke="#7a5200" stroke-width="1" stroke-linejoin="round"/><path d="M3.4,2.6 L7.7,0.5 L12.6,1.8 L8.4,3.9 Z" fill="#fdea86"/><path d="M8.4,3.9 L12.6,1.8 V7 L8.4,9.2 Z" fill="#f9dc55"/><path d="M0.5,6 L3.4,4.5 L3.4,7.4 Z" fill="#fdea86"/><path d="M8.4,9.2 L12.6,7 L16.6,8.6 L11.6,11.4 Z" fill="#fdea86"/><path d="M11.6,11.4 L16.6,8.6 V14.2 L11.2,17.5 Z" fill="#f9dc55"/><path d="M3.4,2.6 L8.4,3.9 V9.2 L11.6,11.4 L11.2,17.5 M8.4,3.9 L12.6,1.8 M8.4,9.2 L12.6,7 M11.6,11.4 L16.6,8.6 M0.5,6 L3.4,7.4 V2.6" fill="none" stroke="#7a5200" stroke-width="0.7" stroke-linejoin="round"/></svg>
<span class="t" style="left:24.9px;top:60.2px;font-size:13px;line-height:15px;transform:scaleX(0.8110);">Part1</span>
<span class="t" style="left:57.2px;top:60.2px;font-size:13px;line-height:15px;transform:scaleX(0.9101);">(50mm, 6 tacaka&lt;&lt;Default&gt;_Displ</span>
<div class="sel"></div>
<svg class="ic" style="left:7px;top:86.2px;" width="5" height="8" viewBox="0 0 5 8"><path d="M0,0.4 L4.4,3.7 L0,7 Z" fill="#6e6e6e"/></svg>
<svg class="ic" style="left:24px;top:81.39999999999999px;" width="18" height="17" viewBox="0 0 18 17"><path d="M0.6,16 V1.7 Q0.6,0.6 1.7,0.6 H5.4 Q6.3,0.6 6.8,1.4 L7.6,2.6 H16.2 Q17.4,2.6 17.4,3.8 V16 Q17.4,16.5 16.9,16.5 H1.1 Q0.6,16.5 0.6,16 Z" fill="#cfcfcf" stroke="#2e2e2e" stroke-width="1.2"/><path d="M1.7,4.7 H16.3 V15.4 H1.7 Z" fill="#f1f1f1"/><path d="M1.7,15.4 L16.3,4.7 V15.4 Z" fill="#e1e1e4"/><circle cx="11.2" cy="9.8" r="4.1" fill="#fff" stroke="#2a2a2a" stroke-width="1"/><path d="M11.2,7.4 V9.8 L13.4,10.8" fill="none" stroke="#2a2a2a" stroke-width="0.9"/><path d="M7.4,6.2 Q4.4,8.4 5.4,12.4 Q7,14.6 10,14.4" fill="none" stroke="#2e7fc0" stroke-width="1.9"/><path d="M2.6,9.4 L8.4,9.9 L5.6,13.6 Z" fill="#2e7fc0"/></svg>
<span class="t" style="left:47.4px;top:82.2px;font-size:13px;line-height:15px;transform:scaleX(0.9222);">History</span>
<svg class="ic" style="left:24px;top:103.39999999999999px;" width="18" height="17" viewBox="0 0 18 17"><path d="M0.6,16 V1.7 Q0.6,0.6 1.7,0.6 H5.4 Q6.3,0.6 6.8,1.4 L7.6,2.6 H16.2 Q17.4,2.6 17.4,3.8 V16 Q17.4,16.5 16.9,16.5 H1.1 Q0.6,16.5 0.6,16 Z" fill="#cfcfcf" stroke="#2e2e2e" stroke-width="1.2"/><path d="M1.7,4.7 H16.3 V15.4 H1.7 Z" fill="#f1f1f1"/><path d="M1.7,15.4 L16.3,4.7 V15.4 Z" fill="#e1e1e4"/><circle cx="9.8" cy="10.2" r="4.3" fill="#fff" stroke="#1e1e1e" stroke-width="1.4"/><path d="M7.2,7.6 L9.8,10.2" stroke="#2e7fc0" stroke-width="1.7"/><path d="M9.8,10.2 L12.2,8" stroke="#333" stroke-width="0.9"/><circle cx="12" cy="12.2" r="1.6" fill="#ee2a1c"/></svg>
<span class="t" style="left:47.4px;top:104.2px;font-size:13px;line-height:15px;transform:scaleX(0.8282);">Sensors</span>
<svg class="ic" style="left:7px;top:130.2px;" width="5" height="8" viewBox="0 0 5 8"><path d="M0,0.4 L4.4,3.7 L0,7 Z" fill="#6e6e6e"/></svg>
<svg class="ic" style="left:24px;top:125.39999999999998px;" width="18" height="17" viewBox="0 0 18 17"><path d="M0.6,16 V1.7 Q0.6,0.6 1.7,0.6 H5.4 Q6.3,0.6 6.8,1.4 L7.6,2.6 H16.2 Q17.4,2.6 17.4,3.8 V16 Q17.4,16.5 16.9,16.5 H1.1 Q0.6,16.5 0.6,16 Z" fill="#cfcfcf" stroke="#2e2e2e" stroke-width="1.2"/><path d="M1.7,4.7 H16.3 V15.4 H1.7 Z" fill="#f1f1f1"/><path d="M1.7,15.4 L16.3,4.7 V15.4 Z" fill="#e1e1e4"/><text x="9" y="15.3" font-family="Liberation Serif, serif" font-weight="bold" font-size="14" text-anchor="middle" fill="#2a7aae">A</text></svg>
<span class="t" style="left:47.4px;top:126.2px;font-size:13px;line-height:15px;transform:scaleX(0.9379);">Annotations</span>
<svg class="ic" style="left:7px;top:152.2px;" width="5" height="8" viewBox="0 0 5 8"><path d="M0,0.4 L4.4,3.7 L0,7 Z" fill="#6e6e6e"/></svg>
<svg class="ic" style="left:24px;top:147.39999999999998px;" width="18" height="17" viewBox="0 0 18 17"><path d="M0.6,16 V1.7 Q0.6,0.6 1.7,0.6 H5.4 Q6.3,0.6 6.8,1.4 L7.6,2.6 H16.2 Q17.4,2.6 17.4,3.8 V16 Q17.4,16.5 16.9,16.5 H1.1 Q0.6,16.5 0.6,16 Z" fill="#cfcfcf" stroke="#2e2e2e" stroke-width="1.2"/><path d="M1.7,4.7 H16.3 V15.4 H1.7 Z" fill="#f1f1f1"/><path d="M1.7,15.4 L16.3,4.7 V15.4 Z" fill="#e1e1e4"/><path d="M5.6,8.6 L9,7 L12.6,8.6 V12.8 L9,14.6 L5.6,12.8 Z" fill="#2f86bd" stroke="#123c5c" stroke-width="0.9" stroke-linejoin="round"/><path d="M5.6,8.6 L9,10.2 L12.6,8.6 M9,10.2 V14.6" fill="none" stroke="#123c5c" stroke-width="0.8"/><path d="M6.2,8.7 L9,7.5 L12,8.7 L9,9.9 Z" fill="#6fb7e3"/></svg>
<span class="t" style="left:47.4px;top:148.2px;font-size:13px;line-height:15px;transform:scaleX(0.8745);">Solid Bodies(1)</span>
<svg class="ic" style="left:23px;top:168.39999999999998px;" width="20" height="20" viewBox="0 0 20 20"><path d="M6.5,2.6 H17.5 M6.5,8.4 H17.5 M6.5,14.6 H10.5" stroke="#2b2b2b" stroke-width="1.7"/><circle cx="2.6" cy="2.6" r="2" fill="#f2f2f2" stroke="#666" stroke-width="0.9"/><circle cx="2.6" cy="8.4" r="2" fill="#4aa3dd" stroke="#1d5f8f" stroke-width="0.9"/><circle cx="2.6" cy="14.6" r="2" fill="#f0b400" stroke="#a87900" stroke-width="0.9"/><circle cx="14.8" cy="14.8" r="2.6" fill="none" stroke="#1d1d1d" stroke-width="2"/><path d="M14.8,10.8 V18.8 M10.8,14.8 H18.8 M12,12 L17.6,17.6 M17.6,12 L12,17.6" stroke="#1d1d1d" stroke-width="1.5"/><circle cx="14.8" cy="14.8" r="1.1" fill="#fafafa"/></svg>
<span class="t" style="left:47.4px;top:170.2px;font-size:13px;line-height:15px;transform:scaleX(0.8801);">Plain Carbon Steel</span>
<svg class="ic" style="left:26px;top:190.2px;" width="14" height="19" viewBox="0 0 14 19"><path d="M1.5,4 L12.5,0.8 V13.6 L1.5,16.8 Z" fill="#fbfbfb" stroke="#3a3a3a" stroke-width="1.1" stroke-linejoin="round"/><path d="M7,0.2 V18" stroke="#3a3a3a" stroke-width="1.1" stroke-dasharray="4.2,1.6,5,1.6,4.2,1.6"/></svg>
<span class="t" style="left:47.4px;top:192.2px;font-size:13px;line-height:15px;transform:scaleX(0.8928);">Front Plane</span>
<svg class="ic" style="left:26px;top:212.2px;" width="14" height="19" viewBox="0 0 14 19"><path d="M1.5,4 L12.5,0.8 V13.6 L1.5,16.8 Z" fill="#fbfbfb" stroke="#3a3a3a" stroke-width="1.1" stroke-linejoin="round"/><path d="M7,0.2 V18" stroke="#3a3a3a" stroke-width="1.1" stroke-dasharray="4.2,1.6,5,1.6,4.2,1.6"/></svg>
<span class="t" style="left:47.4px;top:214.2px;font-size:13px;line-height:15px;transform:scaleX(0.9114);">Top Plane</span>
<svg class="ic" style="left:26px;top:234.2px;" width="14" height="19" viewBox="0 0 14 19"><path d="M1.5,4 L12.5,0.8 V13.6 L1.5,16.8 Z" fill="#fbfbfb" stroke="#3a3a3a" stroke-width="1.1" stroke-linejoin="round"/><path d="M7,0.2 V18" stroke="#3a3a3a" stroke-width="1.1" stroke-dasharray="4.2,1.6,5,1.6,4.2,1.6"/></svg>
<span class="t" style="left:47.4px;top:236.2px;font-size:13px;line-height:15px;transform:scaleX(0.8927);">Right Plane</span>
<svg class="ic" style="left:24px;top:255.4px;" width="19.5" height="18.5" viewBox="0 0 19.5 18.5"><path d="M4,3 V15.4 H15" fill="none" stroke="#111" stroke-width="1.9"/><path d="M4,0 L1.2,4.6 H6.8 Z M19,15.4 L14.4,12.6 V18.2 Z" fill="#111"/><rect x="2.4" y="13.8" width="3.2" height="3.2" fill="#111"/></svg>
<span class="t" style="left:47.4px;top:258.2px;font-size:13px;line-height:15px;transform:scaleX(0.9516);">Origin</span>
<svg class="ic" style="left:7px;top:284.2px;" width="5" height="8" viewBox="0 0 5 8"><path d="M0,0.4 L4.4,3.7 L0,7 Z" fill="#6e6e6e"/></svg>
<svg class="ic" style="left:24px;top:278.8px;" width="19" height="18" viewBox="0 0 19 18"><path d="M7.6,2.6 L12,0.6 L18,2.6 V14.6 L13.6,17 L7.6,14.8 Z" fill="#f6f6f6" stroke="#3c3c3c" stroke-width="1" stroke-linejoin="round"/><path d="M13.6,4.8 V17 M13.6,4.8 L18,2.6 M13.6,4.8 L7.6,2.6" fill="none" stroke="#3c3c3c" stroke-width="0.9"/><path d="M15.2,4.6 V15.2" stroke="#c8c8c8" stroke-width="0.8"/><path d="M0.6,7 L5.6,4.8 L11,6.6 V14.4 L6,16.8 L0.6,14.6 Z" fill="#2f8ac4" stroke="#0f3f63" stroke-width="1" stroke-linejoin="round"/><path d="M0.6,7 L6,9 L11,6.6 M6,9 V16.8" fill="none" stroke="#0f3f63" stroke-width="0.9"/><path d="M1.8,7 L5.6,5.5 L9.8,6.8 L6,8.3 Z" fill="#86c9ee"/><path d="M1.2,8 L5.5,9.6 V15.8 L1.2,14.2 Z" fill="#4ea2dc"/></svg>
<span class="t" style="left:47.4px;top:280.2px;font-size:13px;line-height:15px;transform:scaleX(0.9303);">Cilindar</span>
<svg class="ic" style="left:7px;top:306.2px;" width="5" height="8" viewBox="0 0 5 8"><path d="M0,0.4 L4.4,3.7 L0,7 Z" fill="#6e6e6e"/></svg>
<svg class="ic" style="left:26px;top:300.6px;" width="17" height="18" viewBox="0 0 17 18"><path d="M0.8,3.4 L5,1 L15,1.4 V14.4 L11,17 L0.8,16 Z" fill="#f1f1f1" stroke="#3c3c3c" stroke-width="1" stroke-linejoin="round"/><path d="M11,4 V17 M0.8,3.4 L11,4 L15,1.4" fill="none" stroke="#3c3c3c" stroke-width="0.9"/><path d="M3.2,6.2 H8.8 V13.6 H3.2 Z" fill="#2f8ac4" stroke="#0f3f63" stroke-width="1"/><path d="M6.6,6.2 V10.8 H3.4" fill="none" stroke="#0f3f63" stroke-width="1"/><path d="M3.8,6.8 H6.1 V10.2 H3.8 Z" fill="#8fd0f0"/></svg>
<span class="t" style="left:47.4px;top:301.6px;font-size:13px;line-height:15px;transform:scaleX(0.9360);">6 tacaka</span>
<svg class="ic" style="left:7px;top:328.2px;" width="5" height="8" viewBox="0 0 5 8"><path d="M0,0.4 L4.4,3.7 L0,7 Z" fill="#6e6e6e"/></svg>
<svg class="ic" style="left:26px;top:322.6px;" width="17" height="18" viewBox="0 0 17 18"><path d="M0.8,3.4 L5,1 L15,1.4 V14.4 L11,17 L0.8,16 Z" fill="#f1f1f1" stroke="#3c3c3c" stroke-width="1" stroke-linejoin="round"/><path d="M11,4 V17 M0.8,3.4 L11,4 L15,1.4" fill="none" stroke="#3c3c3c" stroke-width="0.9"/><path d="M3.2,6.2 H8.8 V13.6 H3.2 Z" fill="#2f8ac4" stroke="#0f3f63" stroke-width="1"/><path d="M6.6,6.2 V10.8 H3.4" fill="none" stroke="#0f3f63" stroke-width="1"/><path d="M3.8,6.8 H6.1 V10.2 H3.8 Z" fill="#8fd0f0"/></svg>
<span class="t" style="left:47.4px;top:323.6px;font-size:13px;line-height:15px;transform:scaleX(0.9192);">12tacaka</span>
<svg class="ic" style="left:26px;top:344.6px;" width="17" height="18" viewBox="0 0 17 18"><path d="M1,7 L5.4,1.4 L12,0.6 L16.4,3 V12.8 L8.2,16.8 L1,13.8 Z" fill="#f6f6f6" stroke="#3c3c3c" stroke-width="1" stroke-linejoin="round"/><path d="M1,7 L8.2,9.6 L16.4,3 M8.2,9.6 V16.8" fill="none" stroke="#3c3c3c" stroke-width="0.9"/><path d="M1.6,6.6 L5.6,1.8 L11.8,1.1 L8.2,5.4 Z" fill="#2f8ac4" stroke="#0f3f63" stroke-width="0.8" stroke-linejoin="round"/></svg>
<span class="t" style="left:47.4px;top:345.6px;font-size:13px;line-height:15px;transform:scaleX(0.9629);">Chamfer</span>
</div>
<div class="rollbar"></div>
<div class="tb">
</div>
<svg class="ic" style="left:98.8px;top:264.6px;" width="19" height="18" viewBox="0 0 19 18"><path d="M7.6,2.2 L12,0.6 L17.6,2.6 V14.4 L13,17 L7.6,14.8 Z" fill="#f4f4f4" stroke="#4a4a4a" stroke-width="0.9" stroke-linejoin="round"/><path d="M0.6,6 L6,3.6 L11.4,5.6 V12.6 L6,15.2 L0.6,13 Z" fill="#2f8ac4" stroke="#0f3f63" stroke-width="1" stroke-linejoin="round"/><path d="M0.6,6 L6,8 L11.4,5.6 M6,8 V15.2" fill="none" stroke="#0f3f63" stroke-width="0.9"/><path d="M1.8,6 L6,4.3 L10.2,5.7 L6,7.4 Z" fill="#80c6ec"/><path d="M14.2,3.6 L17.6,6.6 L9.4,15.4 L5.6,17.6 L6.4,13 Z" fill="#f6d83a" stroke="#3a3a3a" stroke-width="1" stroke-linejoin="round"/><path d="M7.6,13.2 L14.4,5.8" stroke="#fff5b0" stroke-width="1"/><path d="M6.4,13 L9.4,15.4 L5.6,17.6 Z" fill="#e9e4d8" stroke="#3a3a3a" stroke-width="0.7" stroke-linejoin="round"/><path d="M14.2,3.6 L17.6,6.6 L16,8.3 L12.6,5.3 Z" fill="#e0301e" stroke="#3a3a3a" stroke-width="0.8"/><path d="M12.6,5.3 L16,8.3 L15.2,9.2 L11.8,6.2 Z" fill="#f2f2f2" stroke="#3a3a3a" stroke-width="0.5"/><path d="M5.6,17.6 L6.1,15.4 L7.6,16.5 Z" fill="#111"/></svg>
<svg class="ic" style="left:128.6px;top:264.6px;" width="19" height="18" viewBox="0 0 19 18"><path d="M0.8,1.6 H17 V16.4 H6 Q0.8,16.4 0.8,11 Z" fill="#fbfbfb"/><path d="M5,1.6 V16 M9.4,1.6 V16 M13.8,1.6 V16 M0.8,6 H17 M0.8,10.4 H17 M2,14.6 H17" stroke="#c9c3bd" stroke-width="0.8"/><path d="M0.8,0.8 H17.4 M0.8,0.8 V11 Q0.8,16.6 6.4,16.6 H17.4" fill="none" stroke="#2878b0" stroke-width="1.8"/><path d="M14.4,3.2 L17.8,6.2 L9.6,15 L5.8,17.2 L6.6,12.6 Z" fill="#f6d83a" stroke="#3a3a3a" stroke-width="1" stroke-linejoin="round"/><path d="M7.8,12.8 L14.6,5.4" stroke="#fff5b0" stroke-width="1"/><path d="M6.6,12.6 L9.6,15 L5.8,17.2 Z" fill="#e9e4d8" stroke="#3a3a3a" stroke-width="0.7" stroke-linejoin="round"/><path d="M14.4,3.2 L17.8,6.2 L16.2,7.9 L12.8,4.9 Z" fill="#e0301e" stroke="#3a3a3a" stroke-width="0.8"/><path d="M12.8,4.9 L16.2,7.9 L15.4,8.8 L12,5.8 Z" fill="#f2f2f2" stroke="#3a3a3a" stroke-width="0.5"/><path d="M5.8,17.2 L6.3,15 L7.8,16.1 Z" fill="#111"/></svg>
<div class="tbbtn"></div>
<svg class="ic" style="left:160.3px;top:264.8px;" width="17" height="18" viewBox="0 0 17 18"><path d="M3,3 V13" stroke="#111" stroke-width="1.6"/><path d="M0,11 L3,16.4 L6,11 Z" fill="#111"/><path d="M8,1.8 L12,0.4 L16.6,1.6 V7 L12.4,8.8 L8,7.4 Z" fill="#2f8ac4" stroke="#0f3f63" stroke-width="0.9" stroke-linejoin="round"/><path d="M8,1.8 L12.4,3.2 L16.6,1.6 M12.4,3.2 V8.8" fill="none" stroke="#0f3f63" stroke-width="0.8"/><path d="M9,1.9 L12,0.9 L15.4,1.8 L12.4,2.8 Z" fill="#80c6ec"/><path d="M8,10.6 L12,9.2 L16.6,10.4 V15.8 L12.4,17.6 L8,16.2 Z" fill="#f6f6f6" stroke="#cfcfcf" stroke-width="0.9" stroke-linejoin="round"/><path d="M8,10.6 L12.4,12 L16.6,10.4 M12.4,12 V17.6" fill="none" stroke="#d6d6d6" stroke-width="0.8"/></svg>
<svg class="ic" style="left:192.3px;top:266.6px;" width="12" height="14" viewBox="0 0 12 14"><path d="M4,4.9 H10.2 V13" fill="none" stroke="#1a1a1a" stroke-width="1.7"/><path d="M0,4.9 L4.6,0 V9.8 Z" fill="#2a2a2a"/></svg>
<svg class="ic" style="left:98.6px;top:296.6px;" width="19" height="15" viewBox="0 0 19 15"><path d="M0.6,7.4 Q9,-1 17.6,7.4 Q9,15.4 0.6,7.4 Z" fill="#ededed" stroke="#9c9c9c" stroke-width="1.3"/><circle cx="9.6" cy="6.8" r="3.7" fill="#c9c9c9" stroke="#a0a0a0" stroke-width="1"/><circle cx="9.6" cy="6.8" r="1.6" fill="#a8a8a8"/><path d="M3,0.4 L15.2,13.8" stroke="#3c3c3c" stroke-width="1.6"/></svg>
<svg class="ic" style="left:128.8px;top:294.8px;" width="19" height="19" viewBox="0 0 19 19"><path d="M7.6,11 L1.6,17" stroke="#1d5f8f" stroke-width="3.4" stroke-linecap="round"/><path d="M7.4,11.2 L1.8,16.8" stroke="#4ea2dc" stroke-width="1.6" stroke-linecap="round"/><circle cx="11.6" cy="6.6" r="5.6" fill="#f3f3f3" stroke="#4a4a4a" stroke-width="1.5"/><path d="M9.2,5.2 H14 M9.2,8 H14" stroke="#1a1a1a" stroke-width="1.5"/></svg>
<svg class="ic" style="left:187.6px;top:293.4px;" width="18" height="18" viewBox="0 0 18 18"><defs><clipPath id="ballc2"><circle cx="9" cy="9" r="8.6"/></clipPath><radialGradient id="ballg2" cx="0.35" cy="0.3" r="0.75"><stop offset="0" stop-color="#fff" stop-opacity="0.75"/><stop offset="0.45" stop-color="#fff" stop-opacity="0"/><stop offset="1" stop-color="#000" stop-opacity="0.3"/></radialGradient></defs><g clip-path="url(#ballc2)"><rect width="18" height="18" fill="#e4c20c"/><path d="M0,0 H9 L7,9.5 L0,10.5 Z" fill="#2f7de0"/><path d="M0,10.5 L7,9.5 L5.6,18 H0 Z" fill="#2db52a"/><path d="M9,0 H18 V9 L7,9.5 Z" fill="#e0241c"/><ellipse cx="13.2" cy="5.6" rx="2.5" ry="4.3" transform="rotate(-28 13.2 5.6)" fill="#c21a14"/><rect width="18" height="18" fill="url(#ballg2)"/></g><circle cx="9" cy="9" r="8.6" fill="none" stroke="#6b5a2a" stroke-width="0.6" opacity="0.6"/></svg>
<svg class="ic" style="left:217.2px;top:302px;" width="5" height="3" viewBox="0 0 5 3"><path d="M0,0 H5 L2.5,3 Z" fill="#333"/></svg>
<svg class="ic" style="left:165px;top:296.6px;" width="6" height="3" viewBox="0 0 6 3"><path d="M0,0.8 H6 M3,0.8 V3" stroke="#1a1a1a" stroke-width="1.4" fill="none"/></svg>
<div class="tip"></div>
<span class="t" style="left:159.3px;top:302.6px;font-size:12px;line-height:13px;transform:scaleX(0.9113);color:#575757;">Suppress</span>
<div class="menu"><div class="msep" style="top:26px;left:0"></div><div class="msep" style="top:268px;left:32px"></div></div>
<span class="t" style="left:93.2px;top:340.8px;font-size:13px;line-height:15px;transform:scaleX(0.9126);font-weight:bold;color:#000;">Feature (12tacaka)</span>
<span class="t" style="left:127.3px;top:365.0px;font-size:13px;line-height:15px;transform:scaleX(0.9221);color:#000;"><u>H</u>ide All Dimensions</span>
<span class="t" style="left:127.3px;top:389.0px;font-size:13px;line-height:15px;transform:scaleX(0.9494);color:#000;">Comment</span>
<svg class="ic" style="left:263.6px;top:393px;" width="5" height="8" viewBox="0 0 5 8"><path d="M0.3,0.3 L4.4,3.8 L0.3,7.3 Z" fill="#555"/></svg>
<span class="t" style="left:127.3px;top:413.2px;font-size:13px;line-height:15px;transform:scaleX(0.9178);color:#000;"><u>P</u>arent/Child...</span>
<span class="t" style="left:127.3px;top:437.2px;font-size:13px;line-height:15px;transform:scaleX(0.9066);color:#000;">C<u>o</u>nfigure Feature</span>
<svg class="ic" style="left:97.6px;top:435.8px;" width="18.5" height="18.5" viewBox="0 0 18.5 18.5"><path d="M0.9,0.2 V17.8" stroke="#2a2a2a" stroke-width="1"/><path d="M2.4,1 H8.8 V7 H2.4 Z" fill="#3f94cf" stroke="#0f3f63" stroke-width="1"/><path d="M3.4,2 H7.8 V4 H3.4 Z" fill="#7fc0ea"/><path d="M13.6,5 L17,8 L8.6,16.4 L4.6,18 L5.6,13.4 Z" fill="#f8e070" stroke="#3a3a3a" stroke-width="1" stroke-linejoin="round"/><path d="M7,13.6 L14.6,6 M8.4,15 L16,7.4" stroke="#d0a820" stroke-width="0.7"/><path d="M13.6,5 L15.2,3.6 Q16,3 16.8,3.8 L18,5 Q18.6,5.8 18,6.6 L17,8 Z" fill="#e0301e" stroke="#8a1a10" stroke-width="0.6"/><path d="M4.6,18 L5.2,15.2 L7.2,16.9 Z" fill="#222"/></svg>
<span class="t" style="left:127.3px;top:461.2px;font-size:13px;line-height:15px;transform:scaleX(0.8531);color:#000;">De<u>l</u>ete...</span>
<svg class="ic" style="left:98.2px;top:460.6px;" width="18.5" height="18.5" viewBox="0 0 18.5 18.5"><path d="M0.6,1.6 Q1.6,0.2 3,1 Q9,5.6 14.8,15.4 Q9,9 3,4.4 Q1.2,3.2 0.6,1.6 Z" fill="#e32b16"/><path d="M16.4,0.4 Q9,4.6 3.6,15.2 Q3,16.6 1.8,16 Q1,15.4 1.6,13.8 Q7,4.4 16.4,0.4 Z" fill="#e32b16"/></svg>
<span class="t" style="left:127.3px;top:485.2px;font-size:13px;line-height:15px;transform:scaleX(0.9054);color:#000;"><u>A</u>dd to Favorites</span>
<svg class="ic" style="left:96.9px;top:485px;" width="18.5" height="18.5" viewBox="0 0 18.5 18.5"><path d="M0.6,16 V1.6 Q0.6,0.6 1.6,0.6 H5.2 L7,2.6 H16.4 Q17.4,2.6 17.4,3.6 V16 Q17.4,16.6 16.8,16.6 H1.2 Q0.6,16.6 0.6,16 Z" fill="#d6d6d6" stroke="#3c3c3c" stroke-width="1"/><path d="M1.8,5 H16.2 V15.4 H1.8 Z" fill="#f0f0f0"/><path d="M1.8,15.4 L16.2,5 V15.4 Z" fill="#e0e0e4"/><path d="M9,6.8 L10.2,9.4 L13,9.7 L10.9,11.6 L11.5,14.4 L9,13 L6.5,14.4 L7.1,11.6 L5,9.7 L7.8,9.4 Z" fill="#3f94cf" stroke="#0f4a73" stroke-width="1" stroke-linejoin="round"/></svg>
<span class="t" style="left:127.3px;top:509.2px;font-size:13px;line-height:15px;transform:scaleX(0.8544);color:#000;">Sa<u>v</u>e Selection</span>
<svg class="ic" style="left:97.6px;top:509.4px;" width="18.5" height="18.5" viewBox="0 0 18.5 18.5"><path d="M3.4,0.8 H14.6 Q15.4,0.8 15.4,1.6 V13.6 Q15.4,14.4 14.6,14.4 H5 L3.4,12.8 Z" fill="#2c74a6" stroke="#123a58" stroke-width="1" stroke-linejoin="round"/><rect x="5.8" y="1.6" width="7.2" height="4.8" fill="#eef2f5"/><path d="M6.6,3 H12.2 M6.6,4.8 H12.2" stroke="#9aa7b0" stroke-width="0.7"/><rect x="6.6" y="9.2" width="6" height="4.4" fill="#c9d3da" stroke="#123a58" stroke-width="0.6"/><rect x="7.6" y="10" width="1.8" height="2.8" fill="#33424d"/><path d="M0.8,4.6 L0.8,13.6 L3,11.8 L4.6,15.2 L6,14.5 L4.4,11.2 L7.2,11 Z" fill="#fff" stroke="#1a1a1a" stroke-width="0.9" stroke-linejoin="round"/></svg>
<span class="t" style="left:127.3px;top:532.8px;font-size:13px;line-height:15px;transform:scaleX(0.9177);color:#000;">Add <u>t</u>o New Folder</span>
<svg class="ic" style="left:96.9px;top:533px;" width="18.5" height="18.5" viewBox="0 0 18.5 18.5"><defs><linearGradient id="nfg" x1="0" y1="0" x2="1" y2="1"><stop offset="0" stop-color="#7cc0e6"/><stop offset="0.6" stop-color="#3f8fc2"/><stop offset="1" stop-color="#2b78ab"/></linearGradient></defs><path d="M0.6,16.2 V1.6 Q0.6,0.6 1.6,0.6 H5.6 L7.4,2.6 H16.6 Q17.6,2.6 17.6,3.6 V16.2 Q17.6,17 16.8,17 H1.4 Q0.6,17 0.6,16.2 Z" fill="#3a8cc2" stroke="#0f4c73" stroke-width="1"/><path d="M1.6,4.6 H16.6 V16 H1.6 Z" fill="url(#nfg)"/><path d="M1.2,4.4 H17" stroke="#0f4c73" stroke-width="0.7"/></svg>
<span class="t" style="left:127.3px;top:556.9px;font-size:13px;line-height:15px;transform:scaleX(0.8751);color:#000;"><u>F</u>eature Properties...</span>
<svg class="ic" style="left:96.9px;top:556.2px;" width="18.5" height="18.5" viewBox="0 0 18.5 18.5"><rect x="0.7" y="0.7" width="16.6" height="16.6" rx="1.2" fill="#f5f6f7" stroke="#2b2b2b" stroke-width="1.2"/><path d="M1.2,1.2 H16.8 V3.8 H1.2 Z" fill="#3f94cf"/><path d="M0.7,4.1 H17.3" stroke="#1f4a6e" stroke-width="0.8"/><rect x="2.4" y="5.8" width="4.2" height="2.4" fill="#2a7fc0" stroke="#114a78" stroke-width="0.6"/><rect x="2.4" y="9.6" width="4.2" height="2.4" fill="#2a7fc0" stroke="#114a78" stroke-width="0.6"/><rect x="2.4" y="13.4" width="4.2" height="2.4" fill="#2a7fc0" stroke="#114a78" stroke-width="0.6"/><path d="M8,7 H15.6 M8,10.8 H15.6 M8,14.6 H15.6" stroke="#2b2b2b" stroke-width="1.1"/></svg>
<span class="t" style="left:127.3px;top:581.3px;font-size:13px;line-height:15px;transform:scaleX(0.8857);color:#000;">Chan<u>g</u>e Transparency</span>
<svg class="ic" style="left:97.2px;top:580.2px;" width="18.5" height="18.5" viewBox="0 0 18.5 18.5"><path d="M4.6,3.6 L8.4,0.6 L12.6,2.2 V6.4 L17.4,8.2 V14.6 L13,17.6 L4.6,13.8 Z" fill="#f7e7a8" stroke="#c9b26a" stroke-width="0.9" stroke-linejoin="round"/><path d="M4.6,3.6 L8.8,5.4 L12.6,2.2 M8.8,5.4 V10.2 L13,12 L17.4,8.2 M13,12 V17.6" fill="none" stroke="#c9b26a" stroke-width="0.7"/><path d="M8.8,5.4 V10.2 L13,12 V17.6 L4.6,13.8 V3.6 Z" fill="#f0d98a" opacity="0.8"/><path d="M0.4,13.2 Q5.8,6.6 11.4,13.2 Q5.8,18.8 0.4,13.2 Z" fill="#fff" stroke="#222" stroke-width="1.1"/><circle cx="5.9" cy="13" r="2.5" fill="#222"/><circle cx="5.2" cy="12.2" r="0.8" fill="#fff"/></svg>
<span class="t" style="left:127.3px;top:607.4px;font-size:13px;line-height:15px;transform:scaleX(0.8728);color:#000;">Feature<u>W</u>orks...</span>
<svg class="ic" style="left:263.6px;top:611.4px;" width="5" height="8" viewBox="0 0 5 8"><path d="M0.3,0.3 L4.4,3.8 L0.3,7.3 Z" fill="#555"/></svg>
<span class="t" style="left:127.3px;top:631.5px;font-size:13px;line-height:15px;transform:scaleX(0.8679);color:#000;">Go To...</span>
<span class="t" style="left:127.3px;top:655.2px;font-size:13px;line-height:15px;transform:scaleX(0.8900);color:#000;">Create New Folder</span>
<div class="red" style="left:20px;top:313px;width:75px;height:31px"></div><div class="red" style="left:146px;top:248px;width:40px;height:43px"></div>
</body></html>
